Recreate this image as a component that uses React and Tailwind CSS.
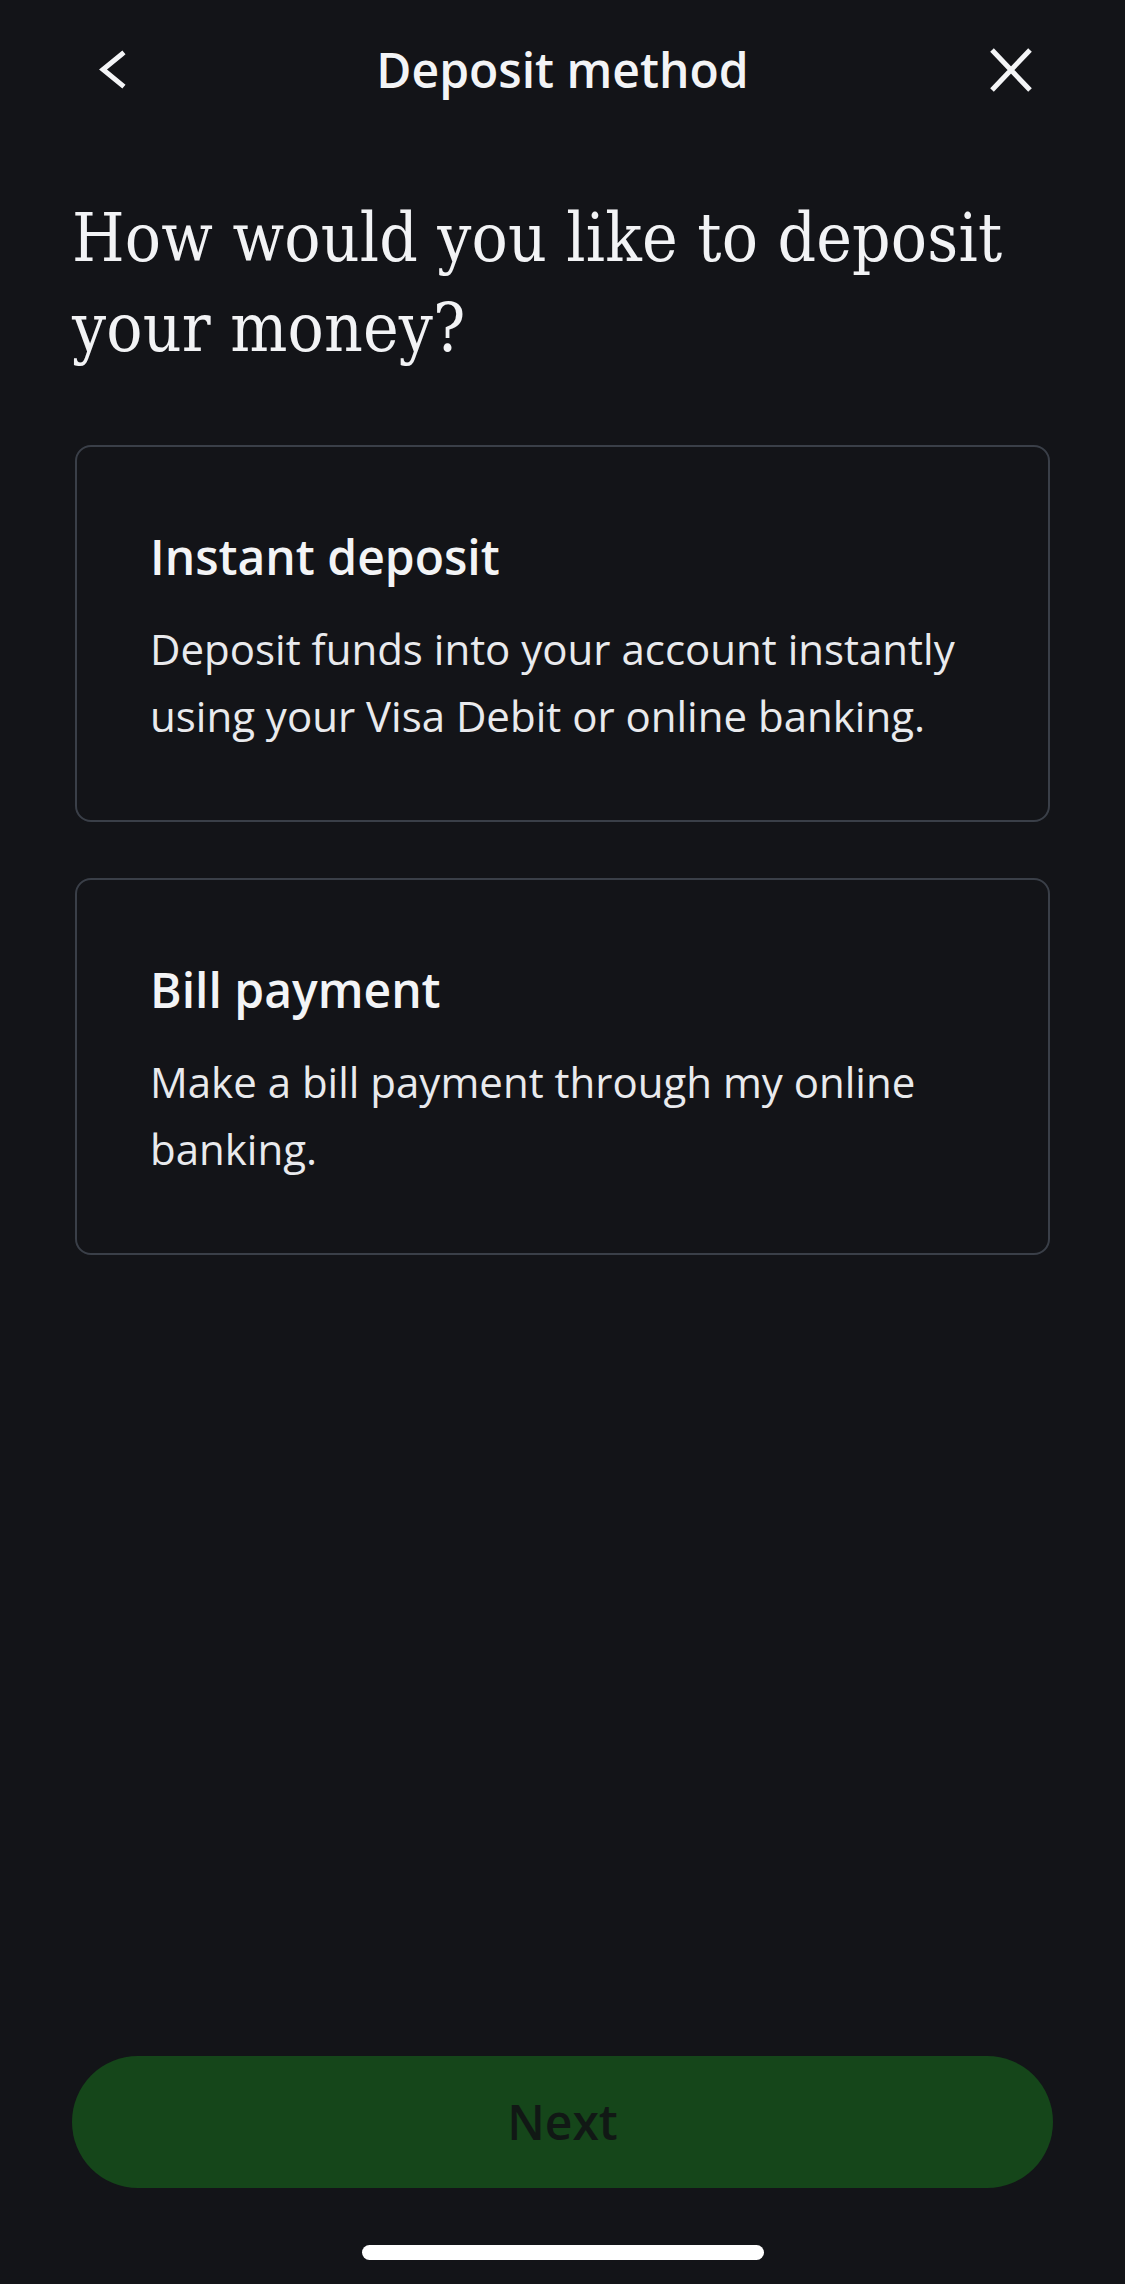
export default function App() {
  const sans = { fontFamily: '"Open Sans", "Noto Sans", sans-serif' };
  return (
    <div
      className="w-[1125px] h-[2284px] bg-[#131418] flex flex-col overflow-hidden"
      style={sans}
    >
      {/* Header */}
      <div className="grid grid-cols-3 items-center h-[140px] shrink-0">
        <div className="flex pl-[93px]">
          <svg width="40" height="40" viewBox="0 0 40 40" fill="none">
            <path
              d="M29 4 L10 19.5 L29 35"
              stroke="#f4f5f7"
              strokeWidth="5"
              strokeLinecap="square"
              strokeLinejoin="miter"
            />
          </svg>
        </div>
        <div className="text-center text-[48px] leading-[64px] font-semibold text-[#f3f4f6] whitespace-nowrap">
          Deposit method
        </div>
        <div className="flex justify-end pr-[90px]">
          <svg width="48" height="48" viewBox="0 0 48 48" fill="none">
            <path d="M5 4 L43 44 M43 4 L5 44" stroke="#f4f5f7" strokeWidth="5" />
          </svg>
        </div>
      </div>

      {/* Heading */}
      <h1
        className="mt-[53px] mx-[72px] text-[67px] leading-[90px] font-normal tracking-[0.2px] text-[#f2f3f5]"
        style={{ fontFamily: '"DejaVu Serif Condensed", "DejaVu Serif", serif' }}
      >
        How would you like to deposit your money?
      </h1>

      {/* Cards */}
      <div className="mt-[72px] mx-[75px] flex flex-col gap-[56px]">
        <div className="border-2 border-[#3a3f48] rounded-[16px] pl-[73px] pr-[57px] pt-[78px] pb-[71px]">
          <div className="text-[48px] leading-[64px] font-semibold text-[#f3f4f6]">
            Instant deposit
          </div>
          <p className="mt-[26px] text-[42px] leading-[67px] text-[#e9eaed]">
            Deposit funds into your account instantly using your Visa Debit or online banking.
          </p>
        </div>
        <div className="border-2 border-[#3a3f48] rounded-[16px] pl-[73px] pr-[57px] pt-[78px] pb-[71px]">
          <div className="text-[48px] leading-[64px] font-semibold text-[#f3f4f6]">
            Bill payment
          </div>
          <p className="mt-[26px] text-[42px] leading-[67px] text-[#e9eaed]">
            Make a bill payment through my online banking.
          </p>
        </div>
      </div>

      {/* Button */}
      <div className="mt-auto mx-[72px] h-[132px] rounded-full bg-[#15461a] flex items-center justify-center">
        <span className="text-[48px] font-semibold text-[#111815]">Next</span>
      </div>

      {/* Home indicator */}
      <div className="mt-[57px] mb-[24px] flex justify-center">
        <div className="w-[402px] h-[15px] rounded-full bg-white" />
      </div>
    </div>
  );
}
